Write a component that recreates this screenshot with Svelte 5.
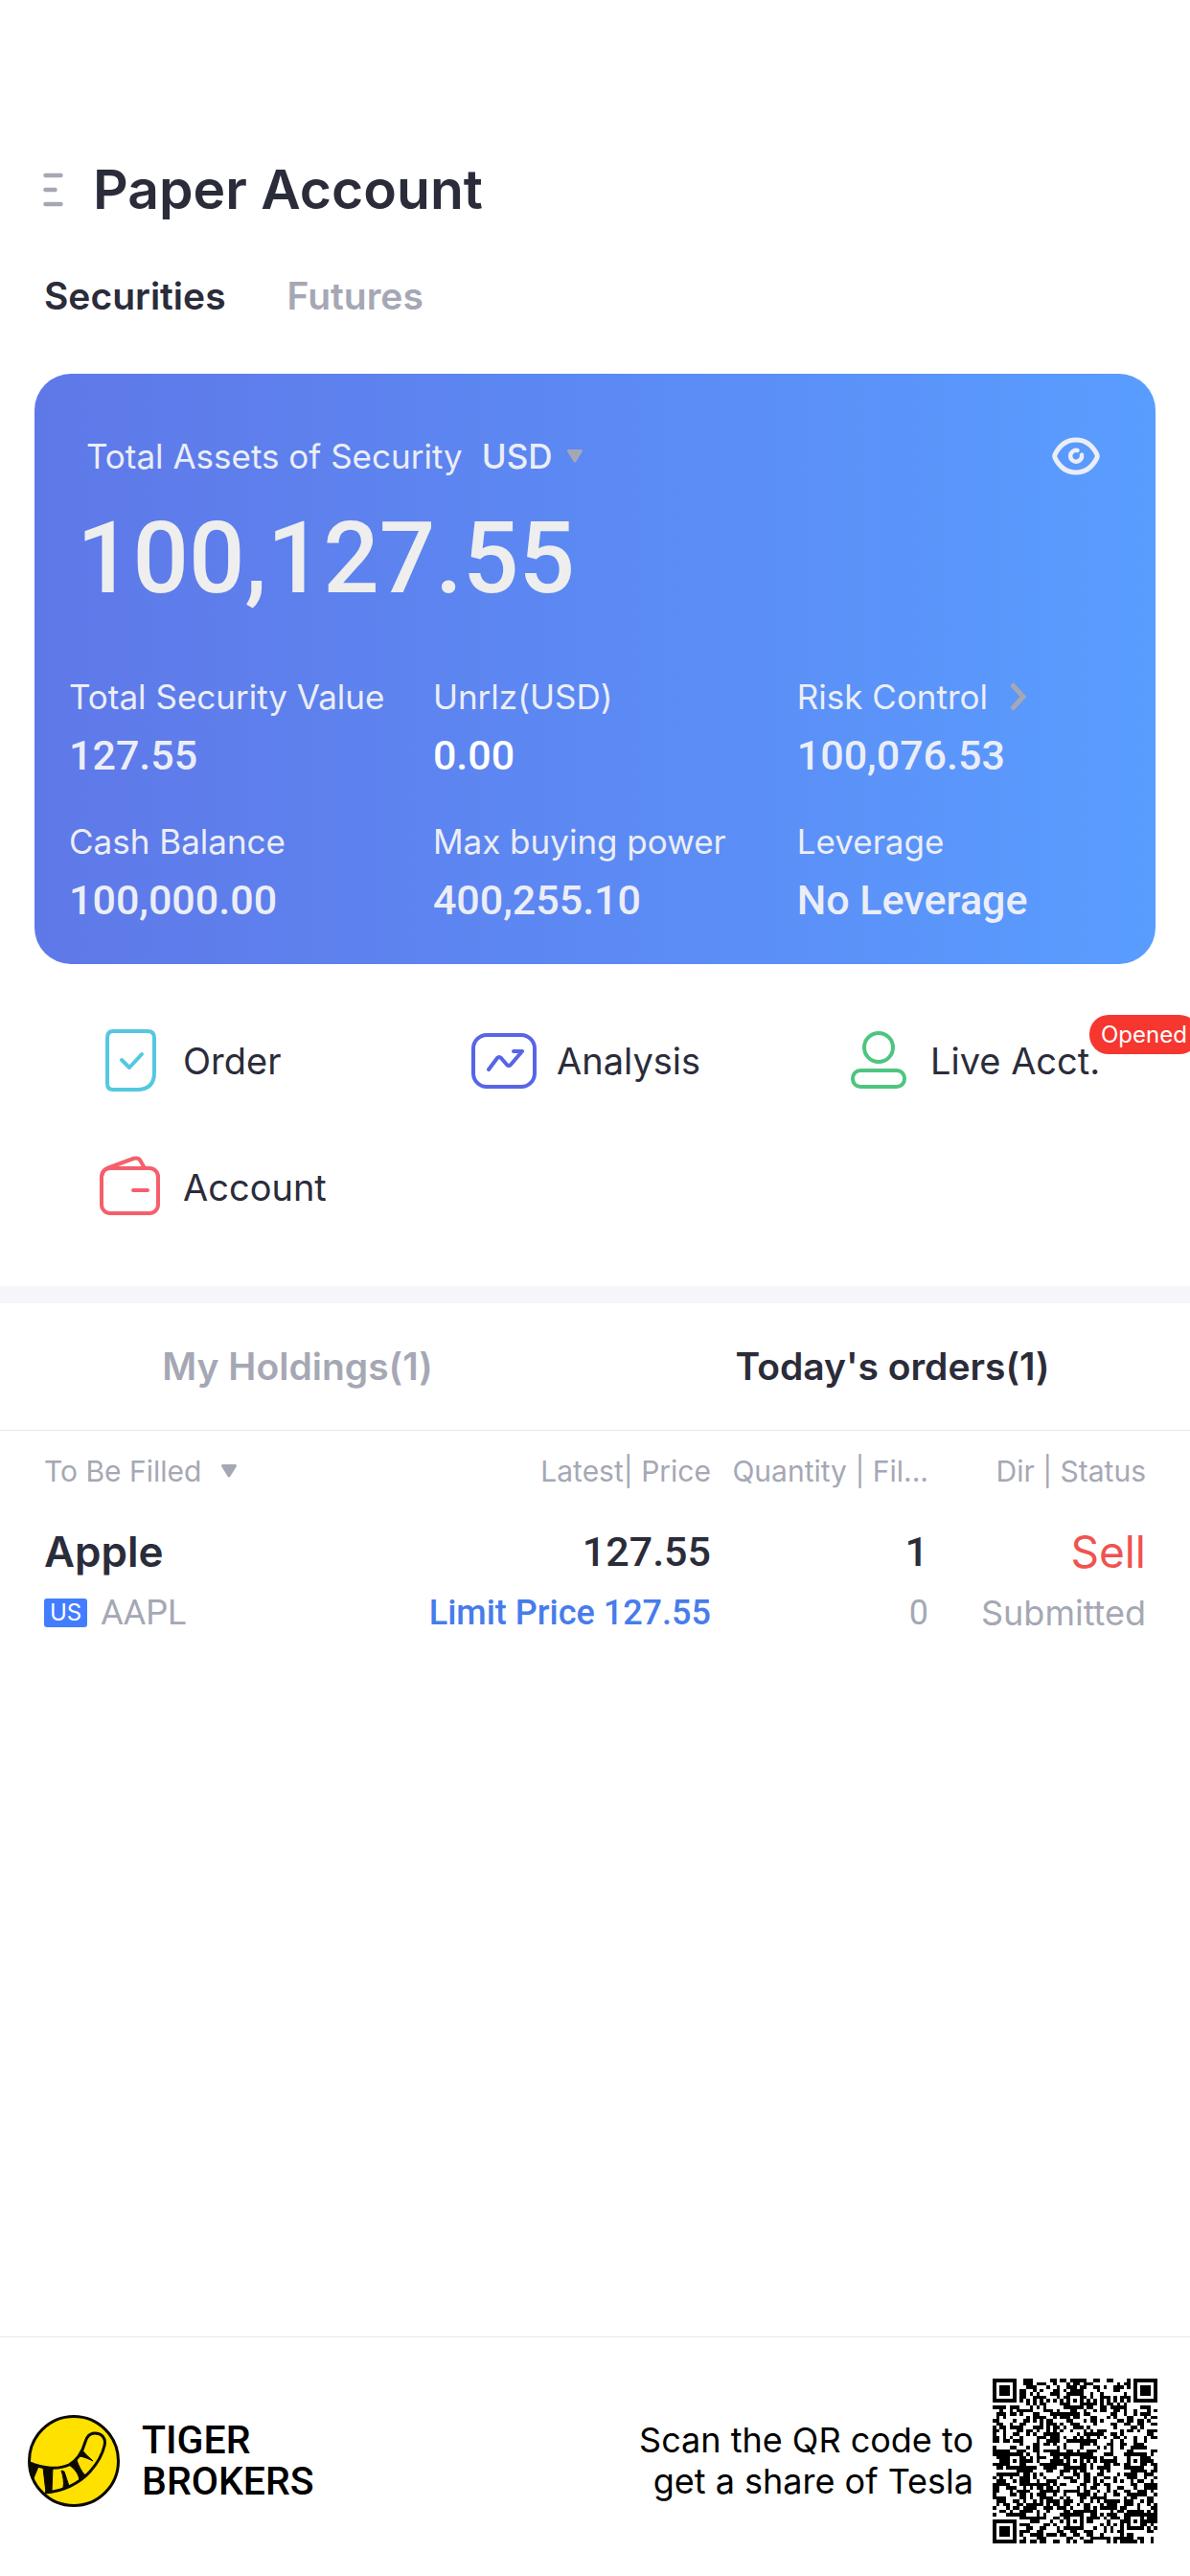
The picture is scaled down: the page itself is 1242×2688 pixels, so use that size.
<script>
  let accountTab = 'Securities';
  let listTab = 'orders';

  const accountTabs = ['Securities', 'Futures'];

  const stats = [
    { label: 'Total Security Value', value: '127.55' },
    { label: 'Unrlz(USD)', value: '0.00', bright: true },
    { label: 'Risk Control', value: '100,076.53', arrow: true },
    { label: 'Cash Balance', value: '100,000.00' },
    { label: 'Max buying power', value: '400,255.10' },
    { label: 'Leverage', value: 'No Leverage' }
  ];

  const actions = [
    { icon: 'order', label: 'Order' },
    { icon: 'analysis', label: 'Analysis' },
    { icon: 'live', label: 'Live Acct.', badge: 'Opened' },
    { icon: 'account', label: 'Account' }
  ];

  const orders = [
    {
      name: 'Apple',
      market: 'US',
      symbol: 'AAPL',
      latest: '127.55',
      price: 'Limit Price 127.55',
      quantity: 1,
      filled: 0,
      side: 'Sell',
      status: 'Submitted'
    }
  ];

  // QR grid, version 8
  const size = 49;

  function square(x, y, cx, cy) {
    return Math.max(Math.abs(x - cx), Math.abs(y - cy));
  }

  function buildQr() {
    const finders = [[3, 3], [size - 4, 3], [3, size - 4]];
    const marks = [[24, 6], [6, 24], [24, 24], [42, 24], [24, 42], [42, 42]];
    let seed = 20210;
    let d = '';
    for (let y = 0; y < size; y++) {
      for (let x = 0; x < size; x++) {
        seed = (seed * 1103515245 + 12345) % 2147483648;
        let on = (seed >> 16) % 2 === 0;
        if (x === 6 || y === 6) on = (x + y) % 2 === 0;
        for (const [cx, cy] of marks) {
          const r = square(x, y, cx, cy);
          if (r <= 2) on = r !== 1;
        }
        for (const [cx, cy] of finders) {
          const r = square(x, y, cx, cy);
          if (r <= 4) on = r !== 2 && r !== 4;
        }
        if (on) d += `M${x} ${y}h1v1h-1z`;
      }
    }
    return d;
  }

  const qrPath = buildQr();
</script>

<div class="page">
  <header>
    <button class="menu" aria-label="Menu">
      <svg width="22" height="36" viewBox="0 0 22 36" fill="none" stroke="#a5a8b4" stroke-width="4.500" stroke-linecap="round">
        <path d="M2.500 3h16M2.500 18h10M2.500 33h16" />
      </svg>
    </button>
    <h1>Paper Account</h1>
  </header>

  <nav class="account-tabs">
    {#each accountTabs as tab}
      <button class:active={accountTab === tab} on:click={() => (accountTab = tab)}>{tab}</button>
    {/each}
  </nav>

  <section class="card">
    <div class="card-top">
      <span class="card-title">Total Assets of Security</span>
      <button class="currency">
        USD
        <svg width="18" height="16" viewBox="0 0 18 16" fill="#a5a8b4" stroke="#a5a8b4" stroke-width="3" stroke-linejoin="round">
          <path d="M2.500 2.500h13L9 13z" />
        </svg>
      </button>
      <button class="eye" aria-label="Hide amounts">
        <svg width="50" height="40" viewBox="0 0 50 40" fill="none" stroke="#ebeef6" stroke-width="5" stroke-linecap="round" stroke-linejoin="round">
          <path d="M3.200 18C8 8.500 15.500 3 25 3s17 5.500 21.800 15q.9 2 0 4C42 31.500 34.500 37 25 37S8 31.500 3.200 22q-.9-2 0-4z" />
          <path d="M26.500 14A6 6 0 1 0 31 18.600" stroke-width="4.500" />
        </svg>
      </button>
    </div>
    <div class="total">100,127.55</div>
    <dl class="stats">
      {#each stats as stat}
        <div>
          <dt>
            {stat.label}
            {#if stat.arrow}
              <svg width="20" height="32" viewBox="0 0 20 32" fill="none" stroke="#a5a8b4" stroke-width="5">
                <path d="M3 3l12 13L3 29" />
              </svg>
            {/if}
          </dt>
          <dd class:bright={stat.bright}>{stat.value}</dd>
        </div>
      {/each}
    </dl>
  </section>

  <section class="actions">
    {#each actions as action}
      <button class="action">
        <svg width="80" height="80" viewBox="0 0 80 80" fill="none" stroke-width="4" stroke-linecap="round" stroke-linejoin="round">
          {#if action.icon === 'order'}
            <g stroke="#54c8e0">
              <path d="M22 9h36q7 0 7 7v36q0 18-18 18H22q-6 0-6-6V16q0-7 6-7z" />
              <path d="M31 39l8 8 13-14" />
            </g>
          {:else if action.icon === 'analysis'}
            <g stroke="#5765e6">
              <rect x="8" y="13" width="64" height="54" rx="14" />
              <path d="M24 49l9-12q2-2 4 0l6 7q2 2 4 0l12-14M50 30h9" />
            </g>
          {:else if action.icon === 'live'}
            <g stroke="#4ec57f">
              <circle cx="41" cy="26" r="15" />
              <rect x="14" y="50" width="54" height="17" rx="8" />
            </g>
          {:else}
            <g stroke="#f55f6c">
              <rect x="10" y="20" width="59" height="47" rx="9" />
              <path d="M11 26q0-4 5-6l27-10q6-2 8 3l4 7M43 43h15" />
            </g>
          {/if}
        </svg>
        <span>{action.label}</span>
        {#if action.badge}
          <span class="badge">{action.badge}</span>
        {/if}
      </button>
    {/each}
  </section>

  <nav class="list-tabs">
    <button class:active={listTab === 'holdings'} on:click={() => (listTab = 'holdings')}>My Holdings(1)</button>
    <button class:active={listTab === 'orders'} on:click={() => (listTab = 'orders')}>Today's orders(1)</button>
  </nav>

  <table>
    <thead>
      <tr>
        <th class="name">
          <button class="filter">
            To Be Filled
            <svg width="18" height="16" viewBox="0 0 18 16" fill="#a5a8b4" stroke="#a5a8b4" stroke-width="3" stroke-linejoin="round">
              <path d="M2.500 2.500h13L9 13z" />
            </svg>
          </button>
        </th>
        <th>Latest| Price</th>
        <th class="narrow">Quantity | Fil...</th>
        <th class="narrow">Dir | Status</th>
      </tr>
    </thead>
    <tbody>
      {#each orders as order}
        <tr>
          <td class="name">
            <div class="main stock">{order.name}</div>
            <div class="sub symbol"><span class="market">{order.market}</span>{order.symbol}</div>
          </td>
          <td>
            <div class="main num">{order.latest}</div>
            <div class="sub num link">{order.price}</div>
          </td>
          <td>
            <div class="main num">{order.quantity}</div>
            <div class="sub filled">{order.filled}</div>
          </td>
          <td>
            <div class="main sell">{order.side}</div>
            <div class="sub">{order.status}</div>
          </td>
        </tr>
      {/each}
    </tbody>
  </table>

  <footer>
    <svg class="logo" width="96" height="96" viewBox="0 0 96 96">
      <circle cx="48" cy="48" r="46.500" fill="#ffe100" stroke="#0c0a00" stroke-width="3" />
      <path d="M2 50C16 56 32 57 43 52C52 47 57 39 60 28C62 21 66 19 70 19C77 19 82 24 80 32C78 41 73 50 65 59C54 71 37 80 18 81" fill="none" stroke="#0c0a00" stroke-width="3" />
      <path d="M2 50l9 4-5 12zM16 55h10l-1 25-6 1zM35 58l3 1 5 15-6 2c1-6 0-12-2-18zM43 52l8-5c2 6 5 12 9 16l-6 5c-1-6-4-11-11-16zM54 43l4-5c3 4 6 6 10 10-4-2-8-4-14-5z" fill="#0c0a00" stroke="#0c0a00" />
    </svg>
    <div class="brand">TIGER<br />BROKERS</div>
    <p>Scan the QR code to<br />get a share of Tesla</p>
    <svg class="qr" width="172" height="172" viewBox="0 0 {size} {size}" shape-rendering="crispEdges" role="img" aria-label="QR code">
      <path d={qrPath} />
    </svg>
  </footer>
</div>

<style>
  :global(body) {
    background: #fff;
    overflow-x: hidden;
  }

  .page {
    display: flex;
    flex-direction: column;
    min-height: 100vh;
    overflow: hidden;
    font-family: Inter, "Liberation Sans", sans-serif;
    color: #2b2c3a;
  }

  button {
    padding: 0;
    border: 0;
    background: none;
    font: inherit;
    color: inherit;
  }

  svg {
    display: block;
    flex: none;
  }

  header {
    display: flex;
    align-items: center;
    gap: 30px;
    padding: 160px 45px 0;
  }

  h1 {
    margin: 0;
    font-size: 57px;
    line-height: 76px;
    font-weight: 600;
  }

  .account-tabs {
    display: flex;
    gap: 64px;
    padding: 48px 46px 0;
    font-size: 39px;
    line-height: 50px;
    font-weight: 600;
    color: #a5a8b4;
  }

  .active {
    color: #2b2c3a;
  }

  .card {
    margin: 56px 36px 0;
    padding: 60px 0 41px 36px;
    border-radius: 38px;
    background: linear-gradient(90deg, #5f78e8, #5c89f3 50%, #599dff);
    color: #ebeef6;
  }

  .card-top {
    display: flex;
    align-items: center;
    padding: 0 58px 0 18px;
    font-size: 35px;
    line-height: 52px;
  }

  .currency {
    display: flex;
    align-items: center;
    gap: 14px;
    margin-left: 20px;
    font-weight: 500;
  }

  .eye {
    margin-left: auto;
  }

  .total {
    padding-left: 8px;
    font-family: Roboto, sans-serif;
    font-size: 103px;
    line-height: 120px;
    font-weight: 500;
    margin-top: 21px;
    color: #eee;
  }

  .stats {
    display: grid;
    grid-template-columns: 1fr 1fr 33%;
    row-gap: 38px;
    margin: 58px 0 0;
  }

  dt {
    display: flex;
    align-items: center;
    gap: 22px;
    font-size: 35px;
    line-height: 52px;
    white-space: nowrap;
  }

  dd {
    margin: 9px 0 0;
    font-family: Roboto, sans-serif;
    font-size: 43px;
    line-height: 52px;
    font-weight: 500;
  }

  .bright {
    color: #fff;
  }

  .actions {
    display: grid;
    grid-template-columns: repeat(3, 1fr);
    row-gap: 52px;
    padding: 61px 36px 63px;
  }

  .action {
    position: relative;
    display: flex;
    align-items: center;
    gap: 15px;
    padding-left: 60px;
    font-size: 38px;
    line-height: 50px;
    white-space: nowrap;
  }

  .badge {
    position: absolute;
    left: 321px;
    top: -8px;
    padding: 0 12px;
    border-radius: 20px;
    background: #f63730;
    color: #fff;
    font-size: 24px;
    line-height: 41px;
  }

  .list-tabs {
    display: grid;
    grid-template-columns: 1fr 1fr;
    border-top: 18px solid #f5f5fa;
    border-bottom: 1px solid #e8e8ea;
    font-size: 39px;
    line-height: 132px;
    font-weight: 600;
    color: #a5a8b4;
  }

  table {
    width: calc(100% - 92px);
    margin: 0 46px;
    border-collapse: collapse;
    table-layout: fixed;
  }

  th, td {
    padding: 0;
    text-align: right;
    font-weight: 400;
    white-space: nowrap;
  }

  th {
    font-size: 30px;
    line-height: 84px;
    color: #a5a8b4;
  }

  .narrow {
    width: 227px;
  }

  .name {
    width: 30%;
    text-align: left;
  }

  .filter {
    display: flex;
    align-items: center;
    gap: 20px;
  }

  .main {
    font-size: 46px;
    line-height: 84px;
  }

  .stock {
    font-size: 44px;
    font-weight: 600;
  }

  .sub {
    font-size: 36px;
    line-height: 44px;
    color: #a5a8b4;
  }

  .num {
    font-family: Roboto, sans-serif;
    font-weight: 500;
  }

  .main.num {
    font-size: 43px;
  }

  .filled {
    font-family: Roboto, sans-serif;
  }

  .symbol {
    display: flex;
    align-items: center;
    gap: 14px;
    font-family: Roboto, sans-serif;
  }

  .market {
    padding: 0 6px;
    border-radius: 3px;
    background: #437dff;
    color: #fff;
    font-family: Inter, sans-serif;
    font-size: 24px;
    line-height: 30px;
  }

  .sub.link {
    color: #477ceb;
  }

  .sell {
    color: #ef5350;
  }

  footer {
    display: flex;
    align-items: center;
    margin-top: auto;
    padding: 43px 34px 34px 29px;
    border-top: 1px solid #e8e8ea;
    color: #000;
  }

  .brand {
    margin-left: 23px;
    font-family: Roboto, sans-serif;
    font-size: 41px;
    line-height: 43px;
    font-weight: 500;
  }

  footer p {
    margin: 0 20px 0 auto;
    text-align: right;
    font-size: 36px;
    line-height: 43px;
  }
</style>
